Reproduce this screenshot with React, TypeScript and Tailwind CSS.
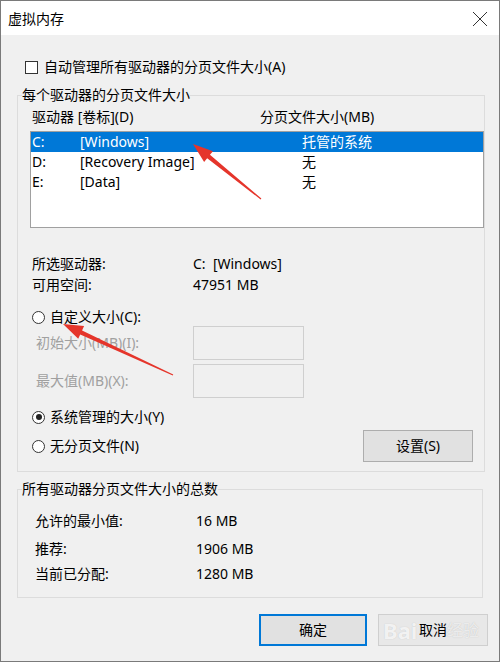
const font = "font-['Noto_Sans','Noto_Sans_CJK_SC',sans-serif]";

interface Pt {
  x: number;
  y: number;
}

// tapered red annotation arrow, tip -> tail
function arrowPoints(tip: Pt, tail: Pt) {
  const dx = tail.x - tip.x;
  const dy = tail.y - tip.y;
  const len = Math.sqrt(dx * dx + dy * dy);
  const ux = dx / len;
  const uy = dy / len;
  const nx = -uy;
  const ny = ux;
  const headLen = 20;
  const headW = 7;
  const shaftW = 2.2;
  const tailW = 0.6;
  const b = { x: tip.x + ux * headLen, y: tip.y + uy * headLen };
  const pts = [
    [tip.x, tip.y],
    [b.x + nx * headW, b.y + ny * headW],
    [b.x + nx * shaftW, b.y + ny * shaftW],
    [tail.x + nx * tailW, tail.y + ny * tailW],
    [tail.x - nx * tailW, tail.y - ny * tailW],
    [b.x - nx * shaftW, b.y - ny * shaftW],
    [b.x - nx * headW, b.y - ny * headW],
  ];
  return pts.map((p) => p.join(",")).join(" ");
}

const Radio = ({ checked }: { checked?: boolean }) => (
  <span className="w-[13px] h-[13px] rounded-full border border-[#333] bg-white flex items-center justify-center shrink-0">
    {checked && <span className="w-[6px] h-[6px] rounded-full bg-[#222]" />}
  </span>
);

const drives = [
  { letter: "C:", label: "[Windows]", size: "托管的系统" },
  { letter: "D:", label: "[Recovery Image]", size: "无" },
  { letter: "E:", label: "[Data]", size: "无" },
];

export default function App() {
  return (
    <div className={`relative w-[500px] h-[662px] border border-[#7a7a7a] flex flex-col text-[14px] text-black leading-[20px] ${font}`}>
      {/* title bar */}
      <div className="h-[34px] bg-white flex items-center justify-between pl-[7px] pr-[11px] pt-[2px] shrink-0">
        <span>虚拟内存</span>
        <svg width="16" height="16" viewBox="0 0 16 16">
          <path d="M1 1 L15 15 M15 1 L1 15" stroke="#333" strokeWidth="1" fill="none" />
        </svg>
      </div>

      <div className="flex-1 bg-[#f0f0f0] px-[16px] flex flex-col">
        <div className="mt-[22px] flex items-center h-[20px] pl-[8px]">
          <span className="w-[13px] h-[13px] border border-[#333] bg-white" />
          <span className="ml-[6px]">自动管理所有驱动器的分页文件大小(A)</span>
        </div>

        <fieldset className="mt-[10px] border border-[#dcdcdc] pb-[9px]">
          <legend className="ml-[4px] leading-[16px]">每个驱动器的分页文件大小</legend>
          <div className="mt-[4px] flex h-[20px] pl-[14px]">
            <span className="w-[228px]">驱动器 [卷标](D)</span>
            <span>分页文件大小(MB)</span>
          </div>
          <div className="mt-[4px] ml-[12px] w-[454px] h-[97px] border border-[#a0a0a0] bg-white">
            {drives.map((d, i) => (
              <div
                key={d.letter}
                className={`flex items-center h-[20px] pl-[1px] ${i === 0 ? "bg-[#0078d7] text-white" : ""}`}
              >
                <span className="w-[48px]">{d.letter}</span>
                <span className="w-[222px]">{d.label}</span>
                <span>{d.size}</span>
              </div>
            ))}
          </div>

          <div className="mt-[26px] pl-[14px] flex h-[20px]">
            <span className="w-[161px]">所选驱动器:</span>
            <span>C:&nbsp; [Windows]</span>
          </div>
          <div className="mt-[1px] pl-[14px] flex h-[20px]">
            <span className="w-[161px]">可用空间:</span>
            <span>47951 MB</span>
          </div>

          <div className="mt-[12px] pl-[14px] flex items-center h-[20px]">
            <Radio />
            <span className="ml-[5px]">自定义大小(C):</span>
          </div>
          <div className="mt-[-1px] pl-[18px] flex items-center h-[34px] text-[#a0a0a0]">
            <span className="w-[157px]">初始大小(MB)(I):</span>
            <span className="w-[111px] h-[34px] border border-[#cfcfcf] bg-[#f0f0f0]" />
          </div>
          <div className="mt-[4px] pl-[18px] flex items-center h-[34px] text-[#a0a0a0]">
            <span className="w-[157px]">最大值(MB)(X):</span>
            <span className="w-[111px] h-[34px] border border-[#cfcfcf] bg-[#f0f0f0]" />
          </div>

          <div className="mt-[9px] pl-[14px] flex items-center h-[20px]">
            <Radio checked />
            <span className="ml-[5px]">系统管理的大小(Y)</span>
          </div>
          <div className="mt-[3px] pl-[14px] pr-[11px] flex items-center justify-between h-[32px]">
            <div className="flex items-center">
              <Radio />
              <span className="ml-[5px]">无分页文件(N)</span>
            </div>
            <button className="w-[110px] h-[32px] bg-[#e1e1e1] border border-[#adadad]">设置(S)</button>
          </div>
        </fieldset>

        <fieldset className="mt-[9px] border border-[#dcdcdc] pb-[13px]">
          <legend className="ml-[4px] leading-[16px]">所有驱动器分页文件大小的总数</legend>
          <div className="mt-[14px] pl-[17px] flex h-[20px]">
            <span className="w-[161px]">允许的最小值:</span>
            <span>16 MB</span>
          </div>
          <div className="mt-[8px] pl-[17px] flex h-[20px]">
            <span className="w-[161px]">推荐:</span>
            <span>1906 MB</span>
          </div>
          <div className="mt-[5px] pl-[17px] flex h-[20px]">
            <span className="w-[161px]">当前已分配:</span>
            <span>1280 MB</span>
          </div>
        </fieldset>

        <div className="mt-[16px] flex justify-end gap-[11px] -mr-[5px]">
          <button className="w-[108px] h-[32px] bg-[#e1e1e1] border-2 border-[#0078d7]">确定</button>
          <button className="relative w-[110px] h-[32px] bg-[#e8e8e8] border border-[#cfcfcf]">
            取消
            <span className="absolute left-[4px] top-[3px] text-[22px] leading-[24px] font-bold text-white/80 [text-shadow:0_0_1px_#bbb]">
              Bai
            </span>
            <span className="absolute left-[68px] top-[6px] text-[16px] leading-[18px] text-white/70 [text-shadow:0_0_1px_#bbb]">
              经验
            </span>
          </button>
        </div>
      </div>

      {/* red annotation arrows */}
      <svg className="absolute left-0 top-0 pointer-events-none" width="500" height="662">
        <polygon points={arrowPoints({ x: 192, y: 143 }, { x: 260, y: 198 })} fill="#e5352b" />
        <polygon points={arrowPoints({ x: 62, y: 323 }, { x: 172, y: 374 })} fill="#e5352b" />
      </svg>
    </div>
  );
}
